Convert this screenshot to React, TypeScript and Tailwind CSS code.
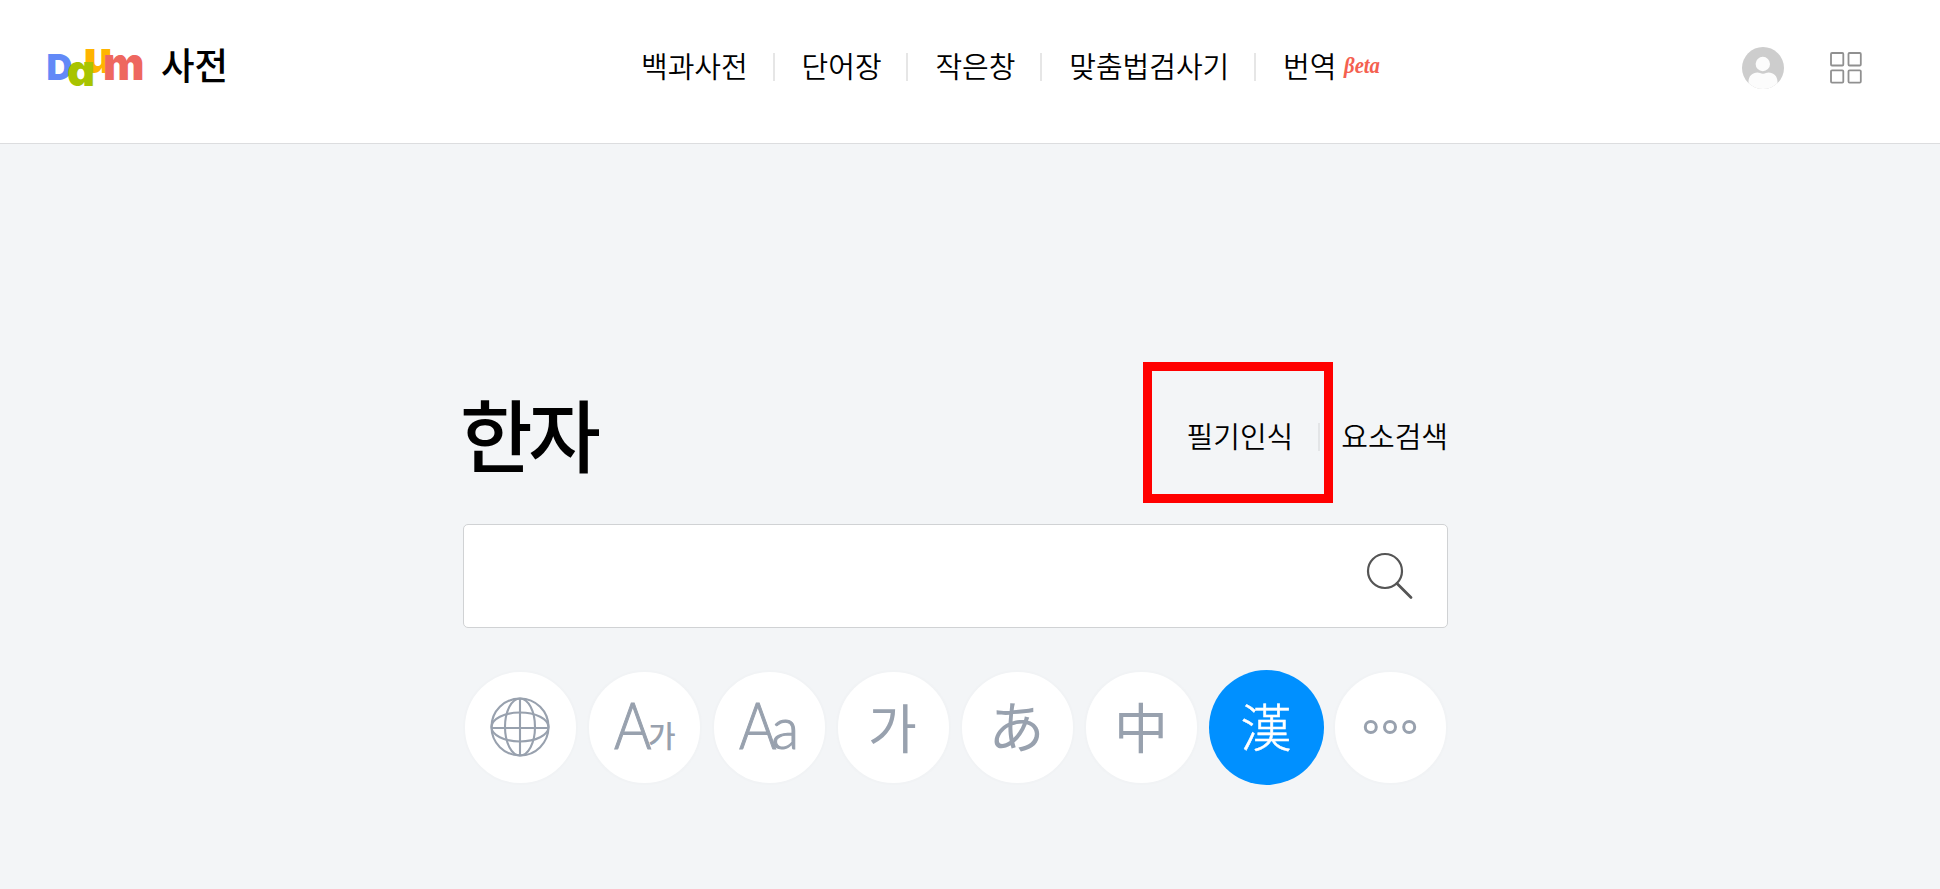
import type { ReactNode } from "react";

const menu = ["백과사전", "단어장", "작은창", "맞춤법검사기", "번역"];

function Logo() {
  return (
    <svg width="96" height="50" viewBox="0 -4 96 50" className="overflow-visible font-['Inter'] font-black [font-feature-settings:'cv11']">
      <text x="-1.500" y="33" fontSize="35.500" fill="#6289f7" textLength="26" lengthAdjust="spacingAndGlyphs">
        D
      </text>
      <text x="35.500" y="26" fontSize="44" fill="#ffb400" textLength="29" lengthAdjust="spacingAndGlyphs">
        u
      </text>
      <text x="19" y="39" fontSize="44" fill="#a8c400" textLength="28" lengthAdjust="spacingAndGlyphs">
        a
      </text>
      <text x="55" y="33" fontSize="46" fill="#ee675f" textLength="41.500" lengthAdjust="spacingAndGlyphs">
        m
      </text>
    </svg>
  );
}

function Divider() {
  return <span className="mr-[27px] ml-[24.8px] h-7 w-0.5 bg-[#e6e6e6]" />;
}

function Avatar() {
  return (
    <svg width="42" height="42" viewBox="0 0 42 42">
      <defs>
        <clipPath id="avatar">
          <circle cx="21" cy="21" r="21" />
        </clipPath>
      </defs>
      <g clipPath="url(#avatar)">
        <rect width="42" height="42" fill="#cdcdcd" />
        <circle cx="20.8" cy="17" r="7.2" fill="#fcfcfc" />
        <path d="M6.500 42V35c0-6 4-9.500 9-9.500 2 0 3 1.200 5.500 1.200s3.500-1.200 5.500-1.200c5 0 9 3.500 9 9.500v7z" fill="#fcfcfc" />
      </g>
    </svg>
  );
}

function GridIcon() {
  return (
    <svg width="32" height="32" viewBox="0 0 32 32" fill="none" stroke="#909090" strokeWidth="1.8">
      <rect x="1" y="1" width="12.300" height="12.500" rx="1" />
      <rect x="18.500" y="1" width="12.300" height="12.500" rx="1" />
      <rect x="1" y="18.300" width="12.300" height="12.300" rx="1" />
      <rect x="18.500" y="18.300" width="12.300" height="12.300" rx="1" />
    </svg>
  );
}

function DictButton({ active, label, children }: { active?: boolean; label: string; children: ReactNode }) {
  return (
    <button
      type="button"
      aria-label={label}
      className={`flex size-[115px] items-center justify-center rounded-full ${
        active ? "bg-[#0090ff] text-white" : "border-2 border-[#f1f3f5] bg-white text-[#98a1ae]"
      }`}
    >
      <svg width="101" height="101" viewBox="-50 -50 101 101" fill="currentColor" className="overflow-visible font-['Noto_Sans_CJK_KR',sans-serif]">
        {children}
      </svg>
    </button>
  );
}

export default function App() {
  return (
    <div className="flex h-[889px] w-[1940px] flex-col overflow-hidden bg-[#f3f5f7] font-['Noto_Sans_CJK_KR',sans-serif] text-black">
      <header className="flex h-36 shrink-0 border-b border-[#dcdddf] bg-white pl-12">
        <div className="mt-[43px] flex w-[593px]">
          <Logo />
          <svg width="90" height="50" viewBox="0 -4 90 50" className="ml-4 overflow-visible font-medium">
            <text x="1" y="33" fontSize="37" textLength="67" lengthAdjust="spacingAndGlyphs">
              사전
            </text>
          </svg>
        </div>
        <nav className="mt-[46px] flex h-[42px] w-[1101px] items-center text-[29px] leading-none font-[350]">
          {menu.map((item, i) => (
            <div key={item} className="flex items-center">
              {i > 0 && <Divider />}
              <a className="-mt-[3px]">{item}</a>
            </div>
          ))}
          <svg width="44" height="30" viewBox="0 0 44 30" className="ml-1.5 font-['Liberation_Serif'] font-bold italic">
            <text x="2" y="21" fontSize="24" fill="#f4604f" textLength="36" lengthAdjust="spacingAndGlyphs">
              βeta
            </text>
          </svg>
        </nav>
        <div className="mt-[47px] flex h-[42px] items-center gap-[46px]">
          <Avatar />
          <GridIcon />
        </div>
      </header>

      <main className="ml-[463px] w-[985px]">
        <div className="mt-[218px] flex h-[161px] items-start justify-between">
          <h1 className="mt-[31px] -ml-[3px] text-[79px] leading-none font-medium tracking-[-4.5px]">한자</h1>
          <div className="relative mt-[61px] flex h-7 items-center text-[29px] leading-none font-[350]">
            <a className="-mt-[3px]">필기인식</a>
            <span className="mr-[21px] ml-[25px] h-7 w-0.5 bg-[#e3e5e7]" />
            <a className="-mt-[3px]">요소검색</a>
            <div className="absolute top-[-61px] left-[-44px] h-[141px] w-[190px] border-9 border-[#ff0000]" />
          </div>
        </div>

        <div className="mt-px flex h-[104px] items-center justify-end rounded-[5px] border border-[#d0d2d4] bg-white pr-[34px]">
          <svg width="48" height="48" viewBox="0 0 48 48" fill="none" stroke="#555" strokeWidth="2.2" strokeLinecap="round">
            <circle cx="20" cy="19" r="17" />
            <path d="M32 31.500l14 14" strokeWidth="2.800" />
          </svg>
        </div>

        <div className="mt-[42px] flex justify-between">
          <DictButton label="전체">
            <g fill="none" stroke="currentColor" strokeWidth="2.1">
              <circle r="28.500" />
              <ellipse rx="15" ry="28.500" />
              <ellipse rx="28.500" ry="14.500" />
              <path d="M0-28.500v57M-28.500 1h57" />
            </g>
          </DictButton>
          <DictButton label="영어">
            <g className="font-['Lato'] font-light" stroke="currentColor" strokeWidth="1.1">
              <text x="-30" y="22" fontSize="65" textLength="37.500" lengthAdjust="spacingAndGlyphs">
                A
              </text>
            </g>
            <text x="4" y="20" fontSize="30" className="font-medium">
              가
            </text>
          </DictButton>
          <DictButton label="영영">
            <g className="font-['Lato'] font-light" stroke="currentColor" strokeWidth="1.1">
              <text x="-30" y="22" fontSize="65" textLength="37.500" lengthAdjust="spacingAndGlyphs">
                A
              </text>
              <text x="2.500" y="22" fontSize="57">
                a
              </text>
            </g>
          </DictButton>
          <DictButton label="한국어">
            <text x="-25" y="21.500" fontSize="53">
              가
            </text>
          </DictButton>
          <DictButton label="일본어">
            <text x="-28.500" y="21" fontSize="56" className="font-['Noto_Sans_CJK_JP',sans-serif]">
              あ
            </text>
          </DictButton>
          <DictButton label="중국어">
            <text x="-27" y="21.500" fontSize="54">
              中
            </text>
          </DictButton>
          <DictButton label="한자" active>
            <text x="-25.500" y="19.500" fontSize="51" stroke="currentColor" strokeWidth="0.5" className="font-light">
              漢
            </text>
          </DictButton>
          <DictButton label="더보기">
            <g fill="none" stroke="currentColor" strokeWidth="3">
              <circle cx="-19.200" r="5.500" />
              <circle r="5.500" />
              <circle cx="19.200" r="5.500" />
            </g>
          </DictButton>
        </div>
      </main>
    </div>
  );
}
